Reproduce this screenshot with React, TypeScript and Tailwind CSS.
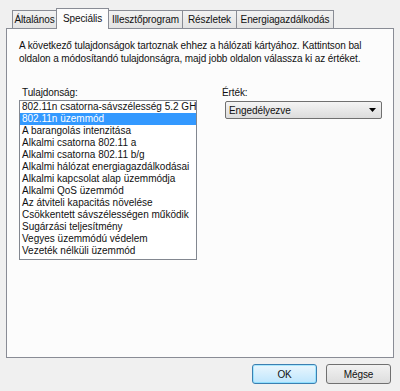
import { useState } from 'react'

const tabs = [
  { label: 'Általános', w: 'w-[45px]' },
  { label: 'Speciális', w: 'w-[53px]' },
  { label: 'Illesztőprogram', w: 'w-[75px]' },
  { label: 'Részletek', w: 'w-[54px]' },
  { label: 'Energiagazdálkodás', w: 'w-[97px]' },
]

const properties = [
  '802.11n csatorna-sávszélesség 5.2 GHz',
  '802.11n üzemmód',
  'A barangolás intenzitása',
  'Alkalmi csatorna 802.11 a',
  'Alkalmi csatorna 802.11 b/g',
  'Alkalmi hálózat energiagazdálkodásai',
  'Alkalmi kapcsolat alap üzemmódja',
  'Alkalmi QoS üzemmód',
  'Az átviteli kapacitás növelése',
  'Csökkentett sávszélességen működik',
  'Sugárzási teljesítmény',
  'Vegyes üzemmódú védelem',
  'Vezeték nélküli üzemmód',
]

export default function App() {
  const [activeTab, setActiveTab] = useState(1)
  const [selected, setSelected] = useState(1)

  return (
    <div
      className="w-[400px] h-[391px] bg-[#f0f0f0] text-[10px] tracking-[-0.1px] text-[#111] overflow-hidden flex flex-col"
      style={{ fontFamily: '"Liberation Sans", Arial, sans-serif' }}
    >
      {/* Tab strip */}
      <div className="flex items-end h-[28px] pl-[12px] relative z-10">
        {tabs.map((tab, i) =>
          i === activeTab ? (
            <button
              key={tab.label}
              onClick={() => setActiveTab(i)}
              className={`${tab.w} h-[21px] -mb-[1px] -mx-[1px] bg-[#fcfcfc] border border-b-0 border-[#898c95] leading-[18px] relative z-10`}
            >
              {tab.label}
            </button>
          ) : (
            <button
              key={tab.label}
              onClick={() => setActiveTab(i)}
              className={`${tab.w} h-[19px] -mb-[1px] border border-[#898c95] bg-gradient-to-b from-[#f2f2f2] to-[#e3e3e3] leading-[16px] [&+&]:border-l-0`}
            >
              {tab.label}
            </button>
          )
        )}
      </div>

      {/* Panel */}
      <div className="ml-[6px] w-[388px] h-[330px] border border-[#898c95] bg-[#fcfcfc] pl-[12px] pt-[10px]">
        <p className="leading-[13px] w-[352px] tracking-[-0.1px]">
          A következő tulajdonságok tartoznak ehhez a hálózati kártyához. Kattintson bal
          oldalon a módosítandó tulajdonságra, majd jobb oldalon válassza ki az értéket.
        </p>

        <div className="flex mt-[21px]">
          {/* Properties */}
          <div className="w-[178px]">
            <div className="pl-[3px] leading-[13px] mb-[1px]">Tulajdonság:</div>
            <ul className="h-[160px] border border-[#828790] bg-white overflow-hidden tracking-normal">
              {properties.map((p, i) => (
                <li
                  key={p}
                  onClick={() => setSelected(i)}
                  className={`h-[12px] leading-[12px] pl-[2px] whitespace-nowrap overflow-hidden cursor-default ${
                    selected === i ? 'bg-[#3399ff] text-white' : ''
                  }`}
                >
                  {p}
                </li>
              ))}
            </ul>
          </div>

          {/* Value */}
          <div className="ml-[25px]">
            <div className="leading-[13px]">Érték:</div>
            <div className="mt-[2px] ml-[3px] w-[157px] h-[18px] border border-[#707070] rounded-[2px] bg-gradient-to-b from-[#f4f4f4] to-[#dcdcdc] flex items-center justify-between pl-[3px] pr-[5px]">
              <span>Engedélyezve</span>
              <svg width="7" height="4" viewBox="0 0 7 4">
                <path d="M0 0h7L3.5 4z" fill="#000" />
              </svg>
            </div>
          </div>
        </div>
      </div>

      {/* Buttons */}
      <div className="flex justify-end gap-[9px] pr-[9px] mt-[6px]">
        <button className="w-[65px] h-[20px] rounded-[3px] border border-[#3c7fb1] bg-gradient-to-b from-[#eaf6fd] to-[#bee6fd] shadow-[inset_0_0_0_1px_#48d4ff66]">
          OK
        </button>
        <button className="w-[65px] h-[20px] rounded-[3px] border border-[#707070] bg-gradient-to-b from-[#f2f2f2] to-[#dddddd]">
          Mégse
        </button>
      </div>
    </div>
  )
}
